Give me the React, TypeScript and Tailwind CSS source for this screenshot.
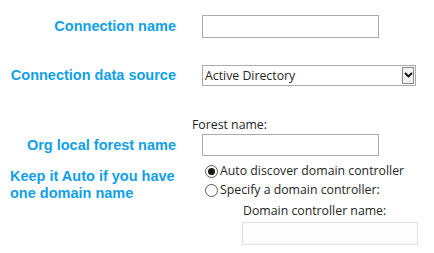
import { useState } from "react";

function Radio({ checked }: { checked: boolean }) {
	return (
		<span className="w-[13px] h-[13px] rounded-full border border-[#5a5a5a] bg-white flex items-center justify-center shrink-0">
			{checked && <span className="w-[7px] h-[7px] rounded-full bg-[#1a1a1a]"></span>}
		</span>
	);
}

export default function App() {
	const [mode, setMode] = useState<"auto" | "manual">("auto");
	const label =
		"w-[176px] mr-[26px] text-right whitespace-nowrap text-[14.5px] font-bold text-[#109fe8] leading-[17px] shrink-0 font-['Liberation_Sans',Arial,sans-serif]";

	return (
		<div className="w-[434px] h-[253px] bg-white text-[12.3px] text-[#262626] font-['Open_Sans',sans-serif]">
			{/* Connection name */}
			<div className="flex items-center pt-[15px] h-[38px]">
				<div className={label}>Connection name</div>
				<input className="w-[177px] h-[23px] border border-[#ababab] bg-white outline-none" />
			</div>

			{/* Data source */}
			<div className="flex items-center mt-[27px] h-[20px]">
				<div className={label}>Connection data source</div>
				<div className="w-[214px] h-[21px] border border-[#ababab] flex items-center">
					<span className="flex-1 pl-[2px] leading-[19px]">Active Directory</span>
					<span className="w-[12px] h-[17px] mr-[1px] border border-[#8a8a8a] bg-[#f2f2f2] flex items-center justify-center">
						<svg width="9" height="6" viewBox="0 0 9 6">
							<path d="M1 1 L4.5 4.5 L8 1" fill="none" stroke="#111" strokeWidth="1.8" />
						</svg>
					</span>
				</div>
			</div>

			{/* Forest */}
			<div className="flex mt-[32px]">
				<div className="w-[192px] shrink-0"></div>
				<div className="leading-[16px]">Forest name:</div>
			</div>
			<div className="flex items-center mt-[1px]">
				<div className={label}>Org local forest name</div>
				<input className="w-[177px] h-[22px] border border-[#ababab] bg-white outline-none" />
			</div>

			{/* Domain controller */}
			<div className="flex mt-[6px]">
				<div className={`${label} text-left! pl-[10px] mt-[6px]`}>
					Keep it Auto if you have
					<br />
					one domain name
				</div>
				<div className="flex flex-col">
					<label
						className="flex items-center gap-[2px] h-[19px] ml-[3px] cursor-pointer"
						onClick={() => setMode("auto")}
					>
						<Radio checked={mode === "auto"} />
						<span>Auto discover domain controller</span>
					</label>
					<label
						className="flex items-center gap-[2px] h-[19px] ml-[3px] cursor-pointer"
						onClick={() => setMode("manual")}
					>
						<Radio checked={mode === "manual"} />
						<span>Specify a domain controller:</span>
					</label>
					<div className="ml-[41px] mt-[2px] leading-[17px]">Domain controller name:</div>
					<input
						disabled
						className="ml-[40px] mt-[3px] w-[176px] h-[23px] border border-[#e1e1e1] bg-[#fdfdfd] outline-none"
					/>
				</div>
			</div>
		</div>
	);
}
